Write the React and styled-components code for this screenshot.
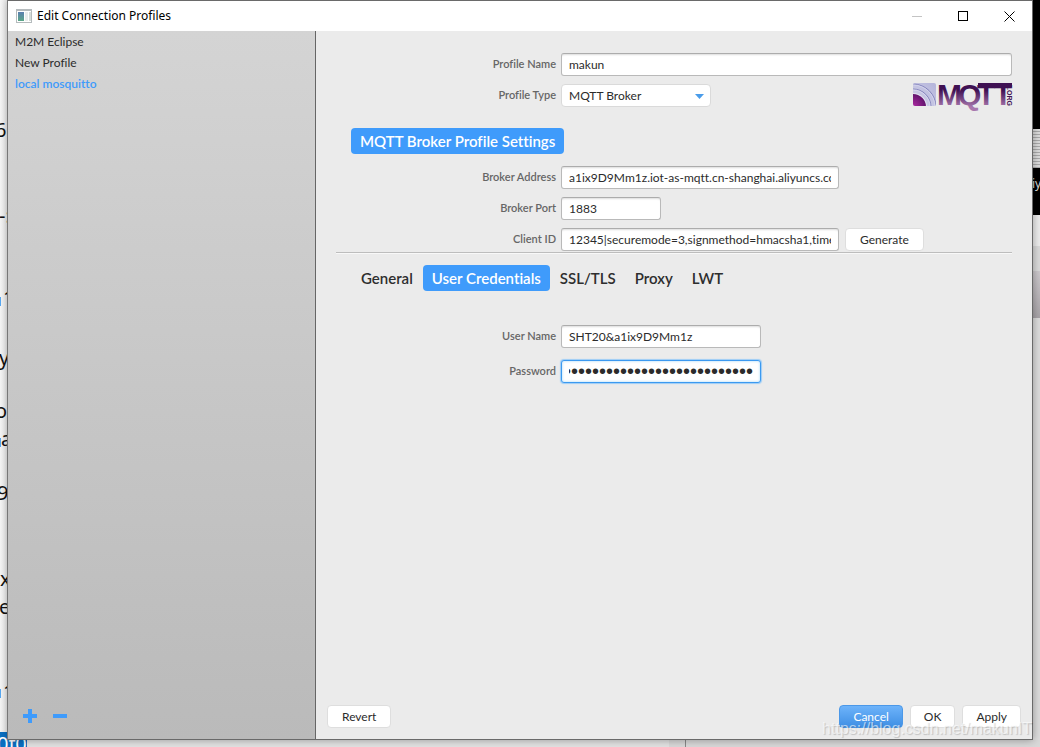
import React, { useLayoutEffect, useRef, useState } from 'react';
import styled, { createGlobalStyle, css } from 'styled-components';

const blue = '#3f9bfb';

const GlobalStyle = createGlobalStyle`
  *, *::before, *::after { box-sizing: border-box; }
  body {
    margin: 0;
    font-family: Lato, sans-serif;
    font-size: 12px;
    color: #2b2b2b;
  }
  button, input, select { font: inherit; color: inherit; }
  body, button, input, select, h1, h2 { font-variant-ligatures: none; }
`;

const Desktop = styled.div`
  position: relative;
  min-height: 100vh;
  padding: 0 7px 7px 8px;
  overflow: hidden;
  background: #e2e2e2;
  display: flex;
`;

const Behind = styled.div`
  position: absolute;
  inset: 0;
  overflow: hidden;
`;

const Pane = styled.div`
  position: absolute;
  left: ${p => p.$left || 'auto'};
  right: ${p => p.$right || 'auto'};
  top: ${p => p.$top};
  bottom: ${p => p.$bottom || 'auto'};
  width: ${p => p.$width || 'auto'};
  height: ${p => p.$height || 'auto'};
  background: ${p => p.$fill};
`;

const Scrap = styled.span`
  position: absolute;
  top: ${p => p.$top}px;
  ${p => (p.$side === 'right' ? 'left: calc(100% - 8px);' : `left: ${p.$left || 0}px;`)}
  font: ${p => p.$size || 20}px/24px "Noto Sans", sans-serif;
  color: ${p => p.$color || '#111'};
  background: ${p => p.$fill || 'transparent'};
  white-space: pre;
`;

const Dialog = styled.main`
  position: relative;
  flex: 1;
  min-width: 0;
  display: flex;
  flex-direction: column;
  border: 1px solid #6a6a6a;
  border-left-width: 0;
  box-shadow: -1px 0 0 #777, 0 0 8px rgba(0, 0, 0, 0.35);
  background: #ebebeb;
`;

const TitleBar = styled.header`
  height: 30px;
  flex: none;
  display: flex;
  align-items: center;
  padding-left: 8px;
  background: #fff;
  color: #000;
`;

const Title = styled.h1`
  flex: 1;
  margin: 0 0 0 5px;
  font: 400 12px/16px "Noto Sans", sans-serif;
`;

const CaptionButton = styled.button`
  width: 46px;
  height: 28px;
  padding: 0;
  border: 0;
  background: none;
  display: grid;
  place-items: center;
`;

const Body = styled.div`
  flex: 1;
  display: flex;
  min-height: 0;
`;

const Sidebar = styled.aside`
  width: 308px;
  flex: none;
  display: flex;
  flex-direction: column;
  justify-content: space-between;
  border-right: 1px solid #666;
  background: linear-gradient(#d4d4d4, #bababa);
`;

const ProfileList = styled.ul`
  list-style: none;
  margin: 0;
  padding: 0;
`;

const ProfileItem = styled.button`
  display: block;
  width: 100%;
  height: 21px;
  padding: 0 7px;
  border: 0;
  background: none;
  text-align: left;
  line-height: 21px;
  ${p => p.$active && css`color: ${blue}; font-weight: 600;`}
`;

const ListTools = styled.div`
  display: flex;
  gap: 14px;
  padding: 0 14px 15px;
`;

const ToolButton = styled.button`
  width: 16px;
  height: 16px;
  padding: 0;
  border: 0;
  background: none;
  display: grid;
  place-items: center;
`;

const Content = styled.section`
  flex: 1;
  min-width: 0;
  display: flex;
  flex-direction: column;
  padding: 22px 11px 11px 11px;
`;

const FormRow = styled.div`
  display: grid;
  grid-template-columns: 229px minmax(0, 1fr);
  column-gap: 5px;
  align-items: center;
  padding-right: 9px;
  margin-bottom: ${p => p.$gap || 0}px;
`;

const Label = styled.label`
  text-align: right;
  font-size: 11px;
  font-weight: 600;
  line-height: 16px;
  padding-bottom: 1px;
  color: #666;
`;

const Field = styled.div`
  display: flex;
  align-items: center;
  gap: 6px;
  justify-content: ${p => (p.$spread ? 'space-between' : 'flex-start')};
`;

const TextInput = styled.input`
  width: ${p => p.$width || '100%'};
  height: 23px;
  padding: 0 7px;
  border: 1px solid #b9b9b9;
  border-top-color: #acacac;
  border-radius: 3px;
  outline: 0;
  background: #fff;
  box-shadow: inset 0 2px 2px -1px #dcdcdc;
  ${p => p.$focused && css`
    border-color: #3b99f0;
    box-shadow: 0 0 1px 1px #9ccdf7, inset 0 0 2px 1px #d4ecfb;
  `}
  &[type='password'] { font: 20px "Liberation Sans", sans-serif; }
`;

const SelectBox = styled.div`
  position: relative;
  width: 150px;
`;

const Select = styled.select`
  appearance: none;
  display: block;
  width: 100%;
  height: 23px;
  padding: 0 24px 0 7px;
  border: 1px solid #dadada;
  border-radius: 4px;
  outline: 0;
  background: #fff;
`;

const SelectArrow = styled.svg`
  position: absolute;
  right: 7px;
  top: 10px;
  pointer-events: none;
`;

const Heading = styled.h2`
  align-self: flex-start;
  margin: 21px 0 12px 24px;
  padding: 0 9px;
  border-radius: 4px;
  background: ${blue};
  color: #fff;
  font-size: 15px;
  font-weight: 600;
  line-height: 26px;
`;

const Button = styled.button`
  height: 23px;
  padding: 0 ${p => (p.$wide ? 14 : 13)}px;
  border: 1px solid #dedede;
  border-radius: 4px;
  background: #fff;
  ${p => p.$primary && css`
    border-color: #4b98e8;
    background: linear-gradient(#6db3fa, #3f8fe4);
    color: #fff;
  `}
`;

const Rule = styled.hr`
  margin: 0 9px 11px;
  border: 0;
  height: 2px;
  background: linear-gradient(#bdbdbd 50%, #f8f8f8 50%);
`;

const Tabs = styled.nav`
  display: flex;
  gap: 1px;
  margin: 0 0 34px 25px;
`;

const Tab = styled.button`
  height: 26px;
  padding: 0 9px;
  border: 0;
  border-radius: 4px;
  background: ${p => (p.$active ? blue : 'none')};
  color: ${p => (p.$active ? '#fff' : '#2e2e2e')};
  font-size: 15px;
  font-weight: 600;
`;

const Footer = styled.footer`
  margin-top: auto;
  display: flex;
  justify-content: space-between;
`;

const Group = styled.div`
  display: flex;
  gap: 7px;
`;

const Watermark = styled.div`
  position: absolute;
  right: 8px;
  bottom: 6px;
  font: 16px/24px "Liberation Sans", sans-serif;
  color: rgba(255, 255, 255, 0.6);
  text-shadow: 1px 1px 1px rgba(0, 0, 0, 0.18);
  pointer-events: none;
`;

function WindowIcon() {
  return (
    <svg width="16" height="14" viewBox="0 0 16 14" aria-hidden="true">
      <defs>
        <linearGradient id="pane" x1="0" y1="0" x2="0" y2="1">
          <stop offset="0" stopColor="#5b7fb0" />
          <stop offset="1" stopColor="#5aa787" />
        </linearGradient>
      </defs>
      <rect width="16" height="14" fill="#b5bbbd" />
      <rect x="1" y="2" width="14" height="11" fill="#fff" />
      <rect x="2" y="3" width="6" height="9" fill="url(#pane)" />
      <rect x="9" y="3" width="3" height="9" fill="#e9ecec" />
      <rect x="13" y="3" width="2" height="9" fill="#d5dcd9" />
    </svg>
  );
}

const Logo = styled.svg`
  display: block;
  overflow: visible;
`;

function MqttLogo() {
  return (
    <Logo width="99" height="23" viewBox="0 1 99 23" role="img" aria-label="MQTT.ORG">
      <defs>
        <linearGradient id="ink" gradientUnits="userSpaceOnUse" x1="0" y1="0" x2="0" y2="24">
          <stop offset="0.3" stopColor="#3f1153" />
          <stop offset="1" stopColor="#a878ae" />
        </linearGradient>
        <radialGradient id="core" gradientUnits="userSpaceOnUse" cx="0" cy="24" r="13">
          <stop offset="0" stopColor="#b02aa4" />
          <stop offset="1" stopColor="#64156e" />
        </radialGradient>
        <linearGradient id="tile" x1="0" y1="1" x2="1" y2="0">
          <stop offset="0" stopColor="#d4d4ea" />
          <stop offset="1" stopColor="#b4b4da" />
        </linearGradient>
        <clipPath id="tileClip"><rect width="23" height="23" rx="2" /></clipPath>
      </defs>
      <g clipPath="url(#tileClip)" fill="none">
        <rect width="23" height="23" fill="url(#tile)" />
        <circle cx="0" cy="24" r="23" stroke="#8484bc" />
        <circle cx="0" cy="24" r="22" stroke="#d4d4ec" />
        <circle cx="0" cy="24" r="18" stroke="#8484bc" />
        <circle cx="0" cy="24" r="17" stroke="#d8d8ee" />
        <circle cx="0" cy="24" r="14" fill="#e4e4f2" />
        <circle cx="0" cy="24" r="13" fill="url(#core)" />
      </g>
      <text x="24 45 64 81" y="22" fontFamily="'Liberation Sans', sans-serif" fontWeight="700" fontSize="30" fill="url(#ink)">MQTT</text>
      <rect x="65" y="0" width="34" height="4" fill="#3f1153" />
      <text transform="translate(94 5) rotate(90)" fontFamily="'Liberation Sans', sans-serif" fontWeight="700" fontSize="7" fill="#3f1153">.ORG</text>
    </Logo>
  );
}

const scraps = [
  [118, '6', -5], [204, '-:', -1], [286, '1', 3], [346, 'y', -1], [399, 'o', -5],
  [427, 'a', 1], [481, '9', -3], [567, 'x'], [595, 'e', -1], [680, '1', 3],
];

const profiles = ['M2M Eclipse', 'New Profile', 'local mosquitto'];
const tabs = ['General', 'User Credentials', 'SSL/TLS', 'Proxy', 'LWT'];

export default function App() {
  const passwordRef = useRef(null);
  const [profile, setProfile] = useState('local mosquitto');
  const [tab, setTab] = useState('User Credentials');

  useLayoutEffect(() => {
    const node = passwordRef.current;
    if (node) node.scrollLeft = node.scrollWidth;
  }, []);

  return (
    <>
      <GlobalStyle />
      <Desktop>
        <Behind aria-hidden="true">
          <Pane $left="0" $top="0" $width="8px" $height="100%" $fill="linear-gradient(90deg, #f6f6f6, #e8e8e8)" />
          {scraps.map(([top, text, left]) => (
            <Scrap key={top} $top={top} $left={left}>{text}</Scrap>
          ))}
          <Pane $left="0" $top="297px" $width="1px" $height="9px" $fill="#58a8f2" />
          <Pane $left="0" $top="438px" $width="1px" $height="9px" $fill="#58a8f2" />
          <Pane $left="0" $top="689px" $width="1px" $height="9px" $fill="#58a8f2" />
          <Scrap $top={732} $left={-3} $size={20} $color="#fff" $fill="#0a6fc2">0f0</Scrap>
          <Pane $right="0" $top="0" $width="8px" $height="215px" $fill="#000" />
          <Pane $right="0" $top="129px" $width="8px" $height="39px" $fill="repeating-linear-gradient(#dcdcdc 0 2px, #aaa 2px 3px)" />
          <Scrap $top={172} $side="right" $size={12} $color="#ddd">iy</Scrap>
          <Pane $right="0" $top="215px" $width="8px" $height="31px" $fill="#ececec" />
          <Pane $right="0" $top="246px" $width="8px" $height="25px" $fill="#dadada" />
          <Pane $right="0" $top="271px" $width="8px" $height="47px" $fill="linear-gradient(#ccc8cc, #a8a4a8)" />
          <Pane $right="0" $top="318px" $width="8px" $bottom="0" $fill="#dcdcdc" />
          <Pane $left="669px" $right="0" $top="740px" $bottom="0" $fill="#d8d8d8" />
          <Pane $left="685px" $width="1px" $top="740px" $bottom="0" $fill="#888" />
        </Behind>

        <Dialog>
          <TitleBar>
            <WindowIcon />
            <Title>Edit Connection Profiles</Title>
            <CaptionButton type="button" aria-label="Minimize">
              <svg width="10" height="10"><path d="M0 5.500H10" stroke="#c4c4c4" /></svg>
            </CaptionButton>
            <CaptionButton type="button" aria-label="Maximize">
              <svg width="10" height="10"><rect x="0.500" y="0.500" width="9" height="9" fill="none" stroke="#000" /></svg>
            </CaptionButton>
            <CaptionButton type="button" aria-label="Close">
              <svg width="11" height="11"><path d="M0.500 0.500L10.500 10.500M10.500 0.500L0.500 10.500" stroke="#000" /></svg>
            </CaptionButton>
          </TitleBar>

          <Body>
            <Sidebar>
              <ProfileList>
                {profiles.map(name => (
                  <li key={name}>
                    <ProfileItem type="button" $active={name === profile} onClick={() => setProfile(name)}>{name}</ProfileItem>
                  </li>
                ))}
              </ProfileList>
              <ListTools>
                <ToolButton type="button" aria-label="Add profile">
                  <svg width="14" height="14"><path d="M7 0V14M0 7H14" stroke={blue} strokeWidth="4" /></svg>
                </ToolButton>
                <ToolButton type="button" aria-label="Remove profile">
                  <svg width="14" height="14"><path d="M0 7H14" stroke={blue} strokeWidth="4" /></svg>
                </ToolButton>
              </ListTools>
            </Sidebar>

            <Content>
              <FormRow $gap={8}>
                <Label htmlFor="name">Profile Name</Label>
                <TextInput id="name" defaultValue="makun" />
              </FormRow>
              <FormRow>
                <Label htmlFor="type">Profile Type</Label>
                <Field $spread>
                  <SelectBox>
                    <Select id="type" defaultValue="MQTT Broker">
                      <option>MQTT Broker</option>
                    </Select>
                    <SelectArrow width="9" height="5"><path d="M0 0H9L4.500 5Z" fill="#4a9cea" /></SelectArrow>
                  </SelectBox>
                  <MqttLogo />
                </Field>
              </FormRow>

              <Heading>MQTT Broker Profile Settings</Heading>
              <FormRow $gap={8}>
                <Label htmlFor="address">Broker Address</Label>
                <TextInput id="address" $width="278px" defaultValue="a1ix9D9Mm1z.iot-as-mqtt.cn-shanghai.aliyuncs.com" />
              </FormRow>
              <FormRow $gap={8}>
                <Label htmlFor="port">Broker Port</Label>
                <TextInput id="port" $width="100px" defaultValue="1883" />
              </FormRow>
              <FormRow $gap={1}>
                <Label htmlFor="client">Client ID</Label>
                <Field>
                  <TextInput id="client" $width="278px" defaultValue="12345|securemode=3,signmethod=hmacsha1,timestamp=789|" />
                  <Button type="button" $wide>Generate</Button>
                </Field>
              </FormRow>
              <Rule />

              <Tabs>
                {tabs.map(name => (
                  <Tab key={name} type="button" $active={name === tab} onClick={() => setTab(name)}>{name}</Tab>
                ))}
              </Tabs>
              <FormRow $gap={12}>
                <Label htmlFor="user">User Name</Label>
                <TextInput id="user" $width="200px" defaultValue="SHT20&amp;a1ix9D9Mm1z" />
              </FormRow>
              <FormRow>
                <Label htmlFor="password">Password</Label>
                <TextInput id="password" ref={passwordRef} type="password" $width="200px" $focused defaultValue="0123456789012345678901234567890123456789" />
              </FormRow>

              <Footer>
                <Button type="button" $wide>Revert</Button>
                <Group>
                  <Button type="button" $primary>Cancel</Button>
                  <Button type="button">OK</Button>
                  <Button type="button">Apply</Button>
                </Group>
              </Footer>
            </Content>
          </Body>
        </Dialog>
        <Watermark>https://blog.csdn.net/makunIT</Watermark>
      </Desktop>
    </>
  );
}
